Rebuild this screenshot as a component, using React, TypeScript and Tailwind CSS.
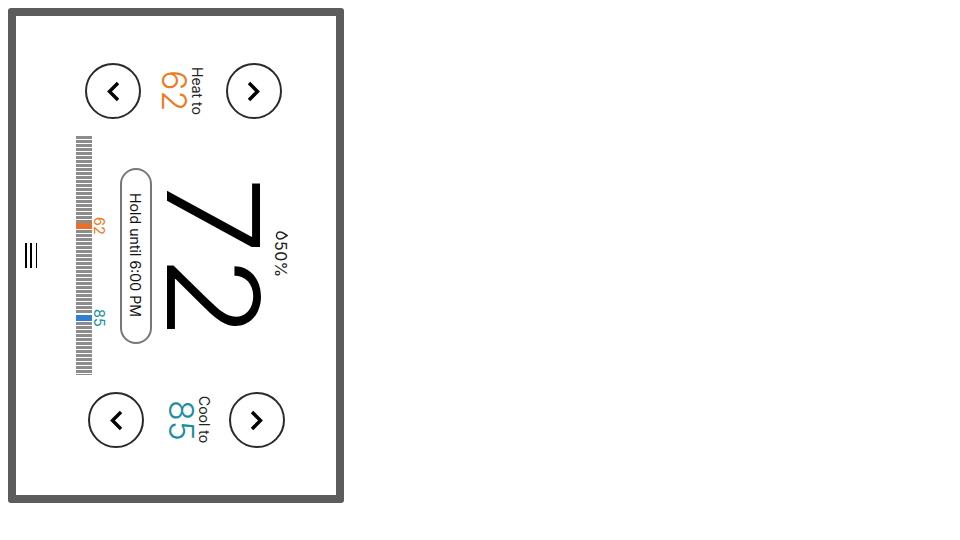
const FONT = "font-['Inter',sans-serif]";
const TICKS = Array.from({ length: 60 }, (_, i) => i);

function Chevron({ dir }: { dir: "left" | "right" }) {
  return (
    <svg width="14" height="21" viewBox="0 0 14 21" fill="none" stroke="#000" strokeWidth="3.4">
      <path d={dir === "left" ? "M12 2 L3.5 10.5 L12 19" : "M2 2 L10.5 10.5 L2 19"} />
    </svg>
  );
}

function RoundButton({ dir }: { dir: "left" | "right" }) {
  return (
    <button className="flex h-14 w-14 shrink-0 items-center justify-center rounded-full border-2 border-[#2a2a2a] bg-white">
      <Chevron dir={dir} />
    </button>
  );
}

function SetPoint({ label, value, color, className, readout }: { label: string; value: string; color: string; className: string; readout: string }) {
  return (
    <div className={`flex items-center ${className}`}>
      <RoundButton dir="left" />
      <div className={`flex w-[85px] items-center ${readout}`}>
        <span className={`w-[27px] text-[34px] leading-[27px] font-light [writing-mode:vertical-rl] ${FONT} ${color}`}>{value}</span>
        <span className={`ml-[2px] w-[15px] text-[14px] leading-[15px] text-[#222] [writing-mode:vertical-rl] ${FONT}`}>{label}</span>
      </div>
      <RoundButton dir="right" />
    </div>
  );
}

export default function App() {
  return (
    <div className="h-[540px] w-[960px] bg-white p-2">
      <div className="h-[495px] w-[336px] rounded-[3px] border-8 border-[#5c5c5c] bg-white">
        <SetPoint label="Heat to" value="62" color="text-[#ee7a22]" className="ml-[69px] mt-[47px]" readout="pl-[20px]" />

        <div className="mt-[17px] flex h-[239px] items-center">
          <div className="ml-[9px] flex h-[25px] w-[12px] justify-between">
            <span className="w-[1.5px] bg-black" />
            <span className="w-[1.5px] bg-black" />
            <span className="w-[1.5px] bg-black" />
          </div>

          <div className="ml-[39px] flex h-full w-[16px] flex-col gap-px overflow-hidden">
            {TICKS.map((t) => (
              <span
                key={t}
                className={
                  t === 22
                    ? "-mt-px h-[6px] shrink-0 bg-[#e8702a]"
                    : t === 44
                      ? "mt-px h-[6px] shrink-0 bg-[#2f80d0]"
                      : "h-[3px] shrink-0 bg-[#8c8c8c]"
                }
              />
            ))}
          </div>

          <div className={`flex h-full w-[15px] flex-col text-[14.5px] leading-[15px] ${FONT}`}>
            <span className="mt-[81px] text-[#ee7a22] [writing-mode:vertical-rl]">62</span>
            <span className="mt-[74px] text-[#1a8ea0] [writing-mode:vertical-rl]">85</span>
          </div>

          <div className="ml-[13px] flex h-[176px] w-[32px] items-center justify-center rounded-[16px] border-2 border-[#777] pl-px pr-[2px]">
            <span className={`text-[14.2px] whitespace-nowrap text-[#111] [writing-mode:vertical-rl] ${FONT}`}>Hold until 6:00 PM</span>
          </div>

          <span className={`ml-[13px] w-[96px] translate-y-[3px] scale-y-[1.09] text-[128px] leading-[96px] font-light text-black [writing-mode:vertical-rl] ${FONT}`}>72</span>

          <div className={`ml-[12px] -mt-[3px] flex w-[16px] flex-col items-center gap-[1px] text-[16px] leading-[16px] tracking-[0.4px] text-[#222] ${FONT}`}>
            <svg width="13" height="9" viewBox="0 0 13 9" fill="none" stroke="#222" strokeWidth="1.5">
              <path d="M12 4.5 C9.5 6 8 8 5 8 A3.5 3.5 0 0 1 5 1 C8 1 9.5 3 12 4.5 Z" />
            </svg>
            <span className="[writing-mode:vertical-rl]">50%</span>
          </div>
        </div>

        <SetPoint label="Cool to" value="85" color="text-[#1a8ea0]" className="ml-[72px] mt-[17px]" readout="pl-[24px]" />
      </div>
    </div>
  );
}
